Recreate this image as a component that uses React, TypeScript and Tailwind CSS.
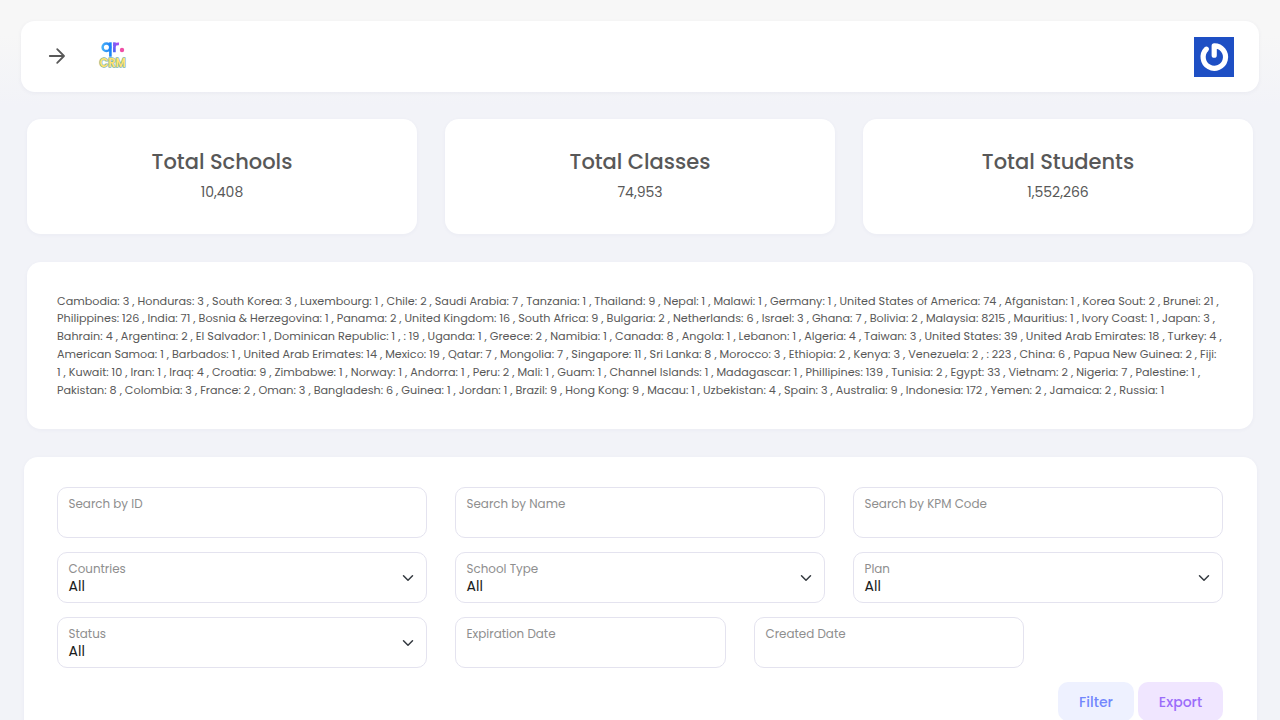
const countryLines = [
  "Cambodia: 3 , Honduras: 3 , South Korea: 3 , Luxembourg: 1 , Chile: 2 , Saudi Arabia: 7 , Tanzania: 1 , Thailand: 9 , Nepal: 1 , Malawi: 1 , Germany: 1 , United States of America: 74 , Afganistan: 1 , Korea Sout: 2 , Brunei: 21 ,",
  "Philippines: 126 , India: 71 , Bosnia & Herzegovina: 1 , Panama: 2 , United Kingdom: 16 , South Africa: 9 , Bulgaria: 2 , Netherlands: 6 , Israel: 3 , Ghana: 7 , Bolivia: 2 , Malaysia: 8215 , Mauritius: 1 , Ivory Coast: 1 , Japan: 3 ,",
  "Bahrain: 4 , Argentina: 2 , El Salvador: 1 , Dominican Republic: 1 , : 19 , Uganda: 1 , Greece: 2 , Namibia: 1 , Canada: 8 , Angola: 1 , Lebanon: 1 , Algeria: 4 , Taiwan: 3 , United States: 39 , United Arab Emirates: 18 , Turkey: 4 ,",
  "American Samoa: 1 , Barbados: 1 , United Arab Erimates: 14 , Mexico: 19 , Qatar: 7 , Mongolia: 7 , Singapore: 11 , Sri Lanka: 8 , Morocco: 3 , Ethiopia: 2 , Kenya: 3 , Venezuela: 2 , : 223 , China: 6 , Papua New Guinea: 2 , Fiji:",
  "1 , Kuwait: 10 , Iran: 1 , Iraq: 4 , Croatia: 9 , Zimbabwe: 1 , Norway: 1 , Andorra: 1 , Peru: 2 , Mali: 1 , Guam: 1 , Channel Islands: 1 , Madagascar: 1 , Phillipines: 139 , Tunisia: 2 , Egypt: 33 , Vietnam: 2 , Nigeria: 7 , Palestine: 1 ,",
  "Pakistan: 8 , Colombia: 3 , France: 2 , Oman: 3 , Bangladesh: 6 , Guinea: 1 , Jordan: 1 , Brazil: 9 , Hong Kong: 9 , Macau: 1 , Uzbekistan: 4 , Spain: 3 , Australia: 9 , Indonesia: 172 , Yemen: 2 , Jamaica: 2 , Russia: 1",
];

function Logo() {
  return (
    <svg className="mb-[3px] ml-[29px] h-[34px] w-[34px]" viewBox="0 0 34 34" fill="none">
      <defs>
        <linearGradient id="q" x1="6" y1="0" x2="17" y2="0" gradientUnits="userSpaceOnUse">
          <stop offset="0" stopColor="#4db8fa" />
          <stop offset="1" stopColor="#1877f2" />
        </linearGradient>
        <linearGradient id="r" x1="17" y1="14" x2="24" y2="5" gradientUnits="userSpaceOnUse">
          <stop offset="0" stopColor="#3b6cf6" />
          <stop offset="1" stopColor="#b44df0" />
        </linearGradient>
      </defs>
      <circle cx="11.4" cy="9.3" r="3.8" stroke="url(#q)" strokeWidth="2.5" />
      <path d="M15.4 4.3v14.4" stroke="#1b86f8" strokeWidth="2.6" />
      <path d="M19.4 14.2V9.2c0-2.5 1.5-3.6 4.6-3.4" stroke="url(#r)" strokeWidth="2.7" />
      <path d="M19.4 4.3v4" stroke="#7a5cf5" strokeWidth="2.7" />
      <circle cx="27" cy="12" r="2.2" fill="#ef4fa6" />
      <text x="17.6" y="29.4" textAnchor="middle" textLength="26" lengthAdjust="spacingAndGlyphs" fontSize="12" fontWeight="600" fill="#ffe36e" stroke="#7fb5ab" strokeWidth="1.5" paintOrder="stroke" strokeLinejoin="round">
        CRM
      </text>
    </svg>
  );
}

function Avatar() {
  return (
    <svg className="ml-auto size-[40px]" viewBox="0 0 40 40" fill="none" stroke="#fff" strokeWidth="5.2" strokeLinecap="round">
      <rect width="40" height="40" fill="#1e4fc4" stroke="none" />
      <path d="M12.4 12.2A11.2 11.2 0 1 0 20.2 8.9V18.2" strokeLinejoin="round" />
    </svg>
  );
}

function Stat({ title, value }: { title: string; value: string }) {
  return (
    <div className="h-[115px] rounded-[14px] bg-white pt-[29px] text-center shadow-[0_1px_4px_rgba(60,60,120,0.04)]">
      <h2 className="text-[21px] leading-[28px] font-medium">{title}</h2>
      <p className="mt-[6px] text-[14px] leading-[21px]">{value}</p>
    </div>
  );
}

function Field({ label, value, className = "w-[370px]" }: { label: string; value?: string; className?: string }) {
  return (
    <div className={`flex h-[51px] items-center justify-between rounded-[10px] border border-[#e4e3ef] pr-[12px] pl-[10.5px] ${className}`}>
      <div className="flex h-full flex-col pt-[7px]">
        <label className="text-[11.9px] leading-[18px] text-[#8e8e8e]">{label}</label>
        {value && <span className="text-[14px] leading-[17px] text-[#1a1d20]">{value}</span>}
      </div>
      {value && (
        <svg className="size-[12px]" viewBox="0 0 16 16" fill="none" stroke="#343a40" strokeWidth="2" strokeLinecap="round" strokeLinejoin="round">
          <path d="m2 5 6 6 6-6" />
        </svg>
      )}
    </div>
  );
}

export default function App() {
  return (
    <div className="h-[720px] overflow-hidden bg-[#f2f3f8] bg-[linear-gradient(180deg,#f7f7f7_0,#f7f7f7_35px,#f2f3f8_105px)] pt-[21px] font-['Poppins','Inter',sans-serif] text-[#585858]">
      <header className="mx-[21px] flex h-[71px] items-center rounded-[14px] bg-white pr-[25px] pl-[27px] shadow-[0_1px_4px_rgba(60,60,120,0.06)]">
        <svg className="mb-[1px] size-[18px]" viewBox="0 0 18 18" fill="none" stroke="#585858" strokeWidth="1.8" strokeLinecap="round" strokeLinejoin="round">
          <path d="M1.8 9h14M9.2 2.2 16 9l-6.8 6.8" />
        </svg>
        <Logo />
        <Avatar />
      </header>
      <div className="mx-[27px] mt-[27px] grid grid-cols-3 gap-[28px]">
        <Stat title="Total Schools" value="10,408" />
        <Stat title="Total Classes" value="74,953" />
        <Stat title="Total Students" value="1,552,266" />
      </div>
      <section className="mx-[27px] mt-[28px] h-[167px] rounded-[14px] bg-white pt-[30.6px] pl-[30px] text-[11.2px] leading-[17.8px] tracking-[0.003px] shadow-[0_1px_4px_rgba(60,60,120,0.04)]">
        {countryLines.map((line) => (
          <p key={line} className="whitespace-nowrap">{line}</p>
        ))}
      </section>
      <main className="mt-[28px] mr-[23px] ml-[24px] h-[300px] rounded-[14px] bg-white pt-[30px] pr-[34px] pl-[33px] shadow-[0_1px_4px_rgba(60,60,120,0.04)]">
        <div className="flex flex-wrap gap-x-[28px] gap-y-[14px]">
          <Field label="Search by ID" />
          <Field label="Search by Name" />
          <Field label="Search by KPM Code" />
          <Field label="Countries" value="All" />
          <Field label="School Type" value="All" />
          <Field label="Plan" value="All" />
          <Field label="Status" value="All" />
          <Field label="Expiration Date" className="w-[271px]" />
          <Field label="Created Date" className="w-[270px]" />
        </div>
        <div className="mt-[14px] flex justify-end gap-[4px] text-[14px] font-medium">
          <button className="h-[39px] w-[76px] rounded-[10px] bg-[#eef1ff] pt-[2px] text-[#7287fd]">Filter</button>
          <button className="h-[39px] w-[85px] rounded-[10px] bg-[#f0e6ff] pt-[2px] text-[#9b6dfa]">Export</button>
        </div>
      </main>
    </div>
  );
}
